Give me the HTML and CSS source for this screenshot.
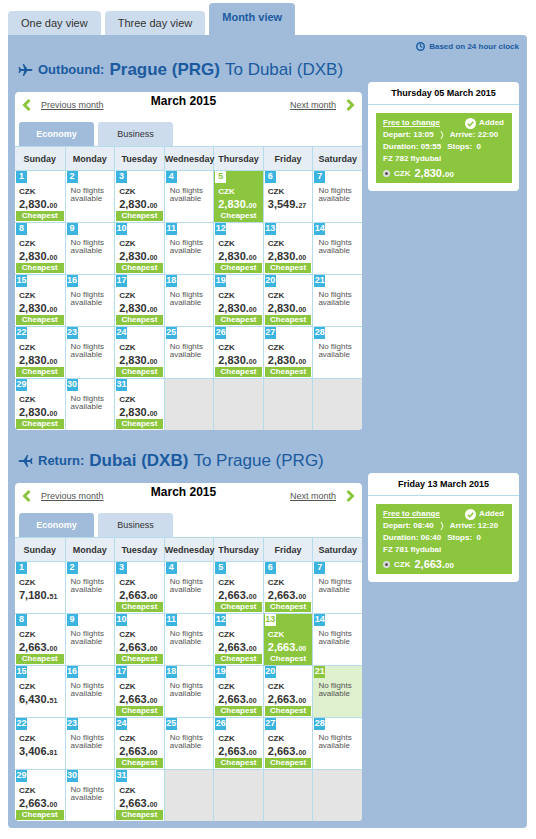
FILE: index.html
```html
<!DOCTYPE html>
<html lang="en">
<head>
  <meta charset="UTF-8">
  <meta name="viewport" content="width=device-width, initial-scale=1.0">
  <title>Select flights - Month view</title>
  <link rel="stylesheet" href="styles.css">
</head>
<body>

  <nav class="view-tabs">
    <a href="#one-day">One day view</a>
    <a href="#three-day">Three day view</a>
    <a href="#month" class="active">Month view</a>
  </nav>

  <main class="panel">
    <p class="clock-note">
      <svg width="9" height="9" viewBox="0 0 18 18" fill="none" stroke="#1b5fa8" stroke-width="3"><circle cx="9" cy="9" r="7.5"/><path d="M9 4v5l4 2" stroke-width="2.4"/></svg>
      Based on 24 hour clock
    </p>

    <!-- Outbound -->
    <section class="trip">
      <div class="trip-main">
        <h2>
          <svg class="plane" width="15" height="14" viewBox="0 0 30 28" fill="#1b5a9f"><path d="M29 14c0-1.400-2-2-4-2h-6.500L12 2H9.500l3 10H6L3.200 8H1l1.500 6L1 20h2.200L6 16h6.500l-3 10H12l6.500-10H25c2 0 4-.6 4-2z"/></svg>
          <span class="direction">Outbound:</span>
          <strong>Prague (PRG)</strong>
          <span>To Dubai (DXB)</span>
        </h2>
        <div class="calendar">
          <div class="month-nav">
            <a href="#prev"><svg width="9" height="12" viewBox="0 0 9 12" fill="none" stroke="#8cc63f" stroke-width="3"><path d="M7.500 1L2.500 6l5 5"/></svg><span>Previous month</span></a>
            <h3>March 2015</h3>
            <a href="#next" class="next"><span>Next month</span><svg width="9" height="12" viewBox="0 0 9 12" fill="none" stroke="#8cc63f" stroke-width="3"><path d="M1.500 1l5 5-5 5"/></svg></a>
          </div>
          <div class="cabin-tabs">
            <button type="button" class="active">Economy</button>
            <button type="button">Business</button>
          </div>
          <table>
            <thead>
              <tr><th>Sunday</th><th>Monday</th><th>Tuesday</th><th>Wednesday</th><th>Thursday</th><th>Friday</th><th>Saturday</th></tr>
            </thead>
            <tbody id="outbound-days"></tbody>
          </table>
        </div>
      </div>

      <aside class="summary">
        <h4>Thursday 05 March 2015</h4>
        <div class="fare">
          <div class="fare-top">
            <a href="#rules">Free to change</a>
            <span class="added"><svg width="11" height="11" viewBox="0 0 22 22"><circle cx="11" cy="11" r="11" fill="#fff"/><path d="M5.500 11.500l4 4 7-8" fill="none" stroke="#8cc63f" stroke-width="3"/></svg>Added</span>
          </div>
          <div class="times"><span>Depart: 13:05</span><svg width="4" height="8" viewBox="0 0 4 8" fill="none" stroke="#fff"><path d="M1 0l2 4-2 4"/></svg><span>Arrive: 22:00</span></div>
          <div class="times"><span>Duration: 05:55</span><span>Stops: &nbsp;0</span></div>
          <div>FZ 782 flydubai</div>
          <label class="fare-price"><input type="radio" name="outbound-fare" checked><span>CZK</span><b>2,830.<small>00</small></b></label>
        </div>
      </aside>
    </section>

    <!-- Return -->
    <section class="trip">
      <div class="trip-main">
        <h2>
          <svg class="plane plane-back" width="15" height="14" viewBox="0 0 30 28" fill="#1b5a9f"><path d="M29 14c0-1.400-2-2-4-2h-6.500L12 2H9.500l3 10H6L3.200 8H1l1.500 6L1 20h2.200L6 16h6.500l-3 10H12l6.500-10H25c2 0 4-.6 4-2z"/></svg>
          <span class="direction">Return:</span>
          <strong>Dubai (DXB)</strong>
          <span>To Prague (PRG)</span>
        </h2>
        <div class="calendar">
          <div class="month-nav">
            <a href="#prev"><svg width="9" height="12" viewBox="0 0 9 12" fill="none" stroke="#8cc63f" stroke-width="3"><path d="M7.500 1L2.500 6l5 5"/></svg><span>Previous month</span></a>
            <h3>March 2015</h3>
            <a href="#next" class="next"><span>Next month</span><svg width="9" height="12" viewBox="0 0 9 12" fill="none" stroke="#8cc63f" stroke-width="3"><path d="M1.500 1l5 5-5 5"/></svg></a>
          </div>
          <div class="cabin-tabs">
            <button type="button" class="active">Economy</button>
            <button type="button">Business</button>
          </div>
          <table>
            <thead>
              <tr><th>Sunday</th><th>Monday</th><th>Tuesday</th><th>Wednesday</th><th>Thursday</th><th>Friday</th><th>Saturday</th></tr>
            </thead>
            <tbody id="return-days"></tbody>
          </table>
        </div>
      </div>

      <aside class="summary">
        <h4>Friday 13 March 2015</h4>
        <div class="fare">
          <div class="fare-top">
            <a href="#rules">Free to change</a>
            <span class="added"><svg width="11" height="11" viewBox="0 0 22 22"><circle cx="11" cy="11" r="11" fill="#fff"/><path d="M5.500 11.500l4 4 7-8" fill="none" stroke="#8cc63f" stroke-width="3"/></svg>Added</span>
          </div>
          <div class="times"><span>Depart: 08:40</span><svg width="4" height="8" viewBox="0 0 4 8" fill="none" stroke="#fff"><path d="M1 0l2 4-2 4"/></svg><span>Arrive: 12:20</span></div>
          <div class="times"><span>Duration: 06:40</span><span>Stops: &nbsp;0</span></div>
          <div>FZ 781 flydubai</div>
          <label class="fare-price"><input type="radio" name="return-fare" checked><span>CZK</span><b>2,663.<small>00</small></b></label>
        </div>
      </aside>
    </section>
  </main>

  <script src="calendar.js"></script>
</body>
</html>
```
FILE: styles.css
```css
* {
  box-sizing: border-box;
}

body {
  margin: 3px 9px 10px 8px;
  font-family: "Liberation Sans", Arial, sans-serif;
  font-size: 9px;
  color: #333;
  background: #fff;
}

h2, h3, h4, p {
  margin: 0;
}

/* View tabs */
.view-tabs {
  display: flex;
  align-items: flex-end;
  gap: 4px;
}

.view-tabs a {
  padding: 0 13px;
  font-size: 11px;
  line-height: 24px;
  color: #333;
  text-decoration: none;
  background: #cddcec;
  border-radius: 4px 4px 0 0;
}

.view-tabs a.active {
  padding-bottom: 4px;
  line-height: 28px;
  font-weight: bold;
  color: #1b5a9f;
  background: #a0bcda;
}

.panel {
  padding: 5px 8px 7px 7px;
  background: #a0bcda;
  border-radius: 0 4px 4px 4px;
}

.clock-note {
  display: flex;
  justify-content: flex-end;
  align-items: center;
  gap: 4px;
  height: 12px;
  font-size: 8px;
  font-weight: bold;
  color: #1b5a9f;
}

/* One direction: calendar on the left, chosen flight on the right */
.trip {
  display: grid;
  grid-template-columns: 1fr 151px;
  align-items: start;
  gap: 6px;
  padding-top: 5px;
}

.trip + .trip {
  padding-top: 18px;
}

.trip h2 {
  display: flex;
  align-items: center;
  gap: 5px;
  height: 35px;
  padding: 0 0 10px 3px;
  font-size: 17px;
  font-weight: normal;
  white-space: nowrap;
  color: #1b5a9f;
}

.trip h2 .direction {
  font-size: 13px;
  font-weight: bold;
}

.plane-back {
  transform: scaleX(-1);
}

.calendar {
  overflow: hidden;
  background: #fff;
  border-radius: 4px;
}

.month-nav {
  display: grid;
  grid-template-columns: 1fr auto 1fr;
  height: 30px;
  padding: 0 7px;
}

.month-nav a {
  display: flex;
  align-items: center;
  gap: 10px;
  height: 26px;
  color: #555;
  text-decoration: none;
}

.month-nav a.next {
  justify-content: flex-end;
}

.month-nav a span {
  text-decoration: underline;
}

.month-nav h3 {
  padding-right: 10px;
  font-size: 12px;
  line-height: 18px;
  color: #000;
}

.cabin-tabs {
  display: flex;
  gap: 4px;
  padding-left: 4px;
}

.cabin-tabs button {
  width: 75px;
  height: 24px;
  padding: 0;
  font-family: inherit;
  font-size: 9px;
  color: #333;
  background: #cddcec;
  border: 0;
  border-radius: 3px 3px 0 0;
}

.cabin-tabs button.active {
  font-weight: bold;
  color: #fff;
  background: #a0bcda;
}

/* Calendar table */
table {
  width: 100%;
  table-layout: fixed;
  border-spacing: 0;
}

th {
  height: 24px;
  padding: 0;
  font-size: 9px;
  text-align: center;
  background: #e6edf5;
  border-top: 1px solid #b5dcea;
}

td {
  height: 52px;
  padding: 0 1px;
  vertical-align: top;
  line-height: 8px;
  border-top: 1px solid #b5dcea;
}

th + th, td + td {
  border-left: 1px solid #b5dcea;
}

.day {
  display: block;
  width: 11px;
  height: 12px;
  font-size: 9px;
  font-weight: bold;
  line-height: 10px;
  text-align: center;
  color: #fff;
  background: #3cb4e0;
}

.currency {
  display: block;
  margin-top: 3px;
  padding-left: 3px;
  font-size: 8px;
  font-weight: bold;
  line-height: 12px;
}

.price {
  display: block;
  height: 13px;
  padding-left: 3px;
  font-size: 11px;
  font-weight: bold;
  line-height: 12px;
  white-space: nowrap;
}

.price small {
  font-size: 7px;
  line-height: 7px;
}

.cheapest {
  display: block;
  height: 10px;
  font-size: 8px;
  font-weight: bold;
  line-height: 9px;
  text-align: center;
  color: #fff;
  background: #8cc63f;
}

.no-flights {
  display: block;
  margin-top: 4px;
  padding-left: 4px;
  font-size: 8px;
  color: #555;
}

.selected {
  color: #fff;
  background: #8cc63f;
}

.selected .day {
  color: #8cc63f;
  background: #fff;
}

.highlight {
  background: #dff0cf;
}

.highlight .day {
  background: #8cc63f;
}

.empty {
  background: #e4e4e4;
}

/* Chosen flight */
.summary {
  margin-top: 25px;
  padding-bottom: 8px;
  background: #fff;
  border-radius: 4px;
}

.summary h4 {
  height: 23px;
  font-size: 9px;
  line-height: 23px;
  text-align: center;
  color: #000;
  border-bottom: 1px solid #b5dcea;
}

.fare {
  height: 70px;
  margin: 8px 7px 0 8px;
  padding: 4px 8px 0 7px;
  font-size: 8px;
  font-weight: bold;
  line-height: 12px;
  color: #fff;
  background: #8cc63f;
}

.fare a {
  color: #fff;
}

.fare-top {
  display: flex;
  justify-content: space-between;
}

.added {
  display: flex;
  align-items: center;
  gap: 3px;
}

.times {
  display: flex;
  align-items: center;
  gap: 6px;
}

.fare-price {
  display: flex;
  align-items: center;
  gap: 4px;
  height: 17px;
}

.fare-price input {
  appearance: none;
  width: 7px;
  height: 7px;
  margin: 0;
  background: #555;
  border: 2px solid #ddd;
  border-radius: 50%;
}

.fare-price b {
  font-size: 11px;
}

.fare-price small {
  font-size: 8px;
}
```
FILE: calendar.js
```javascript
const daysInMonth = 31;

// Fares by day of month, days left out have no flights
const outbound = {
  selected: 5,
  lowest: "2,830.00",
  fares: { 6: "3,549.27" },
  flightDays: [1, 3, 5, 6, 8, 10, 12, 13, 15, 17, 19, 20, 22, 24, 26, 27, 29, 31]
};

const inbound = {
  selected: 13,
  highlight: 21,
  lowest: "2,663.00",
  fares: { 1: "7,180.51", 15: "6,430.51", 22: "3,406.81" },
  flightDays: [1, 3, 5, 6, 8, 10, 12, 13, 15, 17, 19, 20, 22, 24, 26, 27, 29, 31]
};

function dayCell(day, trip) {
  if (day > daysInMonth) {
    return '<td class="empty"></td>';
  }

  let state = "";
  if (day === trip.selected) state = "selected";
  if (day === trip.highlight) state = "highlight";

  let content = '<span class="no-flights">No flights available</span>';
  if (trip.flightDays.includes(day)) {
    const fare = trip.fares[day] || trip.lowest;
    const [whole, cents] = fare.split(".");
    content = `<span class="currency">CZK</span><span class="price">${whole}.<small>${cents}</small></span>`;
    if (fare === trip.lowest) {
      content += '<span class="cheapest">Cheapest</span>';
    }
  }

  return `<td class="${state}"><span class="day">${day}</span>${content}</td>`;
}

function renderMonth(id, trip) {
  let html = "";
  for (let start = 1; start <= daysInMonth; start += 7) {
    html += "<tr>";
    for (let day = start; day < start + 7; day++) {
      html += dayCell(day, trip);
    }
    html += "</tr>";
  }
  document.getElementById(id).innerHTML = html;
}

renderMonth("outbound-days", outbound);
renderMonth("return-days", inbound);
```
